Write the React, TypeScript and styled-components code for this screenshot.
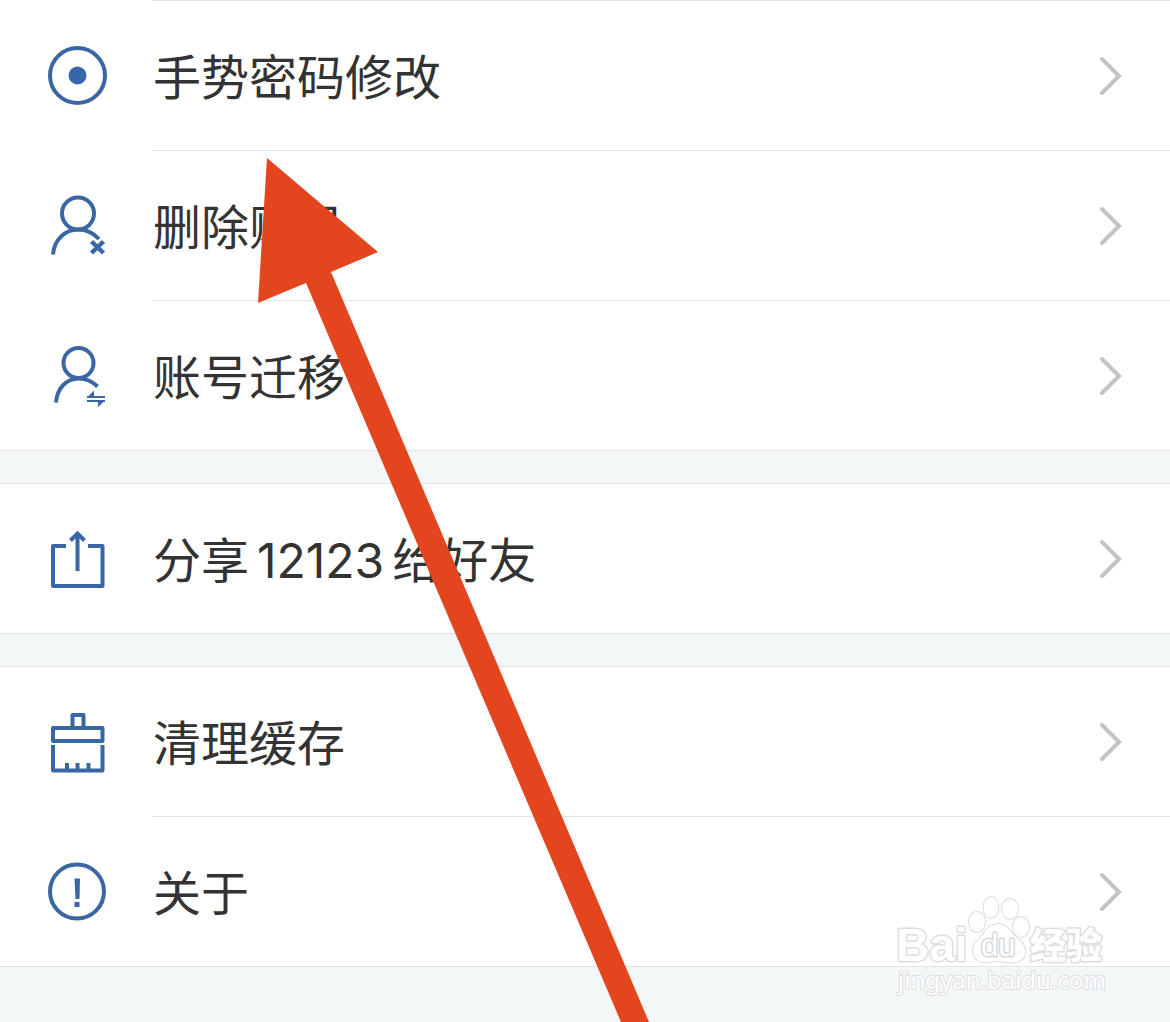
import React from 'react';
import styled, { createGlobalStyle } from 'styled-components';

const GlobalStyle = createGlobalStyle`
  *, *::before, *::after { box-sizing: border-box; }
  body {
    margin: 0;
    background: #f3f7f8;
    color: #333333;
    font-family: Inter, "Noto Sans CJK SC", sans-serif;
  }
`;

const Page = styled.main`
  position: relative;
  min-height: 100vh;
  overflow: hidden;
  display: flex;
  flex-direction: column;
  gap: 32px;
`;

const Group = styled.ul<{ $continued?: boolean }>`
  list-style: none;
  margin: 0;
  padding: 0;
  background: #ffffff;
  border-top: ${p => (p.$continued ? '0' : '1px solid #e2e5e6')};
  border-bottom: 1px solid #e2e5e6;
`;

const Row = styled.button`
  display: flex;
  width: 100%;
  padding: 0;
  border: 0;
  background: none;
  color: inherit;
  font: inherit;
  text-align: left;
  cursor: pointer;
`;

const IconCell = styled.span`
  flex: 0 0 153px;
  display: flex;
  align-items: center;
  padding: 2px 0 0 42px;
`;

const Body = styled.span<{ $divided: boolean }>`
  flex: 1;
  display: flex;
  align-items: center;
  justify-content: space-between;
  height: ${p => (p.$divided ? '150px' : '149px')};
  padding-right: 44px;
  border-top: ${p => (p.$divided ? '1px solid #e3e3e3' : '0')};
`;

const Label = styled.span`
  padding-top: 5px;
  font-size: 48px;
  line-height: 72px;
`;

const Digits = styled.span`
  margin: 0 8px;
`;

const LineIcon = styled.svg`
  display: block;
  width: 70px;
  height: 70px;
  fill: none;
  stroke: #3a67a3;
  stroke-width: 4;
`;

const Chevron = styled.svg`
  width: 30px;
  height: 44px;
  fill: none;
  stroke: #c4c4c6;
  stroke-width: 4;
  stroke-linecap: round;
`;

const Pointer = styled.svg`
  position: absolute;
  top: 0;
  left: 0;
  width: 700px;
  height: 1022px;
  fill: #e3451f;
  pointer-events: none;
`;

const Watermark = styled.svg`
  position: absolute;
  right: 54px;
  top: 890px;
  width: 226px;
  height: 112px;
  fill: #ffffff;
  stroke: #dcdedf;
  stroke-width: 2;
  stroke-linejoin: round;
  paint-order: stroke;
  pointer-events: none;
`;

const BrandText = styled.text`
  font: 700 46px "Liberation Sans", sans-serif;
  stroke-width: 3;
`;

const DuText = styled.text`
  font: 400 31px "Liberation Sans", sans-serif;
  stroke: #d6d8d9;
  stroke-width: 3;
`;

const ChineseText = styled.text`
  font: 900 36px "Noto Sans CJK SC", sans-serif;
  stroke-width: 3;
`;

const AddressText = styled.text`
  font: 400 24px "Noto Sans", sans-serif;
`;

const GestureIcon = () => (
  <LineIcon viewBox="0 0 70 70" aria-hidden="true">
    <circle cx="35.5" cy="34.5" r="27.5" />
    <circle cx="35.5" cy="34.5" r="9" fill="#3866a8" stroke="none" />
  </LineIcon>
);

const RemoveUserIcon = () => (
  <LineIcon viewBox="0 0 70 70" aria-hidden="true">
    <circle cx="36" cy="22.5" r="16" />
    <path d="M11 63.5C12 49 23 38.5 36 38.5C44 38.5 51 41.5 57 48" />
    <path d="M49.5 50.5L61.5 62M61.5 50.5L49.5 62" strokeWidth="4.5" />
  </LineIcon>
);

const TransferUserIcon = () => (
  <LineIcon viewBox="0 0 70 70" aria-hidden="true">
    <circle cx="36.5" cy="22" r="15" />
    <path d="M14 61.5C15 48 24 37.5 36.5 37.5C44 37.5 50 40 55.5 45.5" />
    <path d="M45 56H63M45 60H63" strokeWidth="2" />
    <path d="M44.5 57L52 49.5V57ZM63.5 59L56 66V59Z" fill="#3a67a3" stroke="none" />
  </LineIcon>
);

const ShareIcon = () => (
  <LineIcon viewBox="0 0 70 70" strokeLinejoin="round" aria-hidden="true">
    <path d="M24 21H11V61H60.5V21H46" />
    <path d="M35.5 46V9M28.5 15.5L35.5 8.5L42.5 15.5" strokeLinejoin="miter" />
  </LineIcon>
);

const BrushIcon = () => (
  <LineIcon viewBox="0 0 70 70" strokeLinejoin="round" aria-hidden="true">
    <path d="M30.5 20V7H41.5V20M11 20H60.5V33H11Z" />
    <path d="M11 37V62.5H60.5V37M25 62V55M35.5 62V55M46.5 62V55" />
  </LineIcon>
);

const AboutIcon = () => (
  <LineIcon viewBox="0 0 70 70" aria-hidden="true">
    <circle cx="35" cy="34.5" r="27" />
    <path d="M32.5 21.5H38L37.5 42H33.5ZM32.5 45H37.5V50H32.5Z" fill="#3a67a3" stroke="none" />
  </LineIcon>
);

type Item = { key: string; label: React.ReactNode; Icon: React.ComponentType };

const accountItems: Item[] = [
  { key: 'gesture', label: '手势密码修改', Icon: GestureIcon },
  { key: 'remove', label: '删除账号', Icon: RemoveUserIcon },
  { key: 'transfer', label: '账号迁移', Icon: TransferUserIcon },
];
const shareItems: Item[] = [
  { key: 'share', label: <>分享<Digits>12123</Digits>给好友</>, Icon: ShareIcon },
];
const systemItems: Item[] = [
  { key: 'cache', label: '清理缓存', Icon: BrushIcon },
  { key: 'about', label: '关于', Icon: AboutIcon },
];

function SettingsGroup({ items, continued = false }: { items: Item[]; continued?: boolean }) {
  return (
    <Group $continued={continued}>
      {items.map(({ key, label, Icon }, index) => (
        <li key={key}>
          <Row type="button">
            <IconCell><Icon /></IconCell>
            <Body $divided={continued || index > 0}>
              <Label>{label}</Label>
              <Chevron viewBox="0 0 30 44" aria-hidden="true">
                <path d="M6 5L23 22L6 39" />
              </Chevron>
            </Body>
          </Row>
        </li>
      ))}
    </Group>
  );
}

export default function App() {
  return (
    <>
      <GlobalStyle />
      <Page>
        <SettingsGroup items={accountItems} continued />
        <SettingsGroup items={shareItems} />
        <SettingsGroup items={systemItems} />
        <Pointer viewBox="0 0 700 1022" aria-hidden="true">
          <path d="M267 158L378 252L331 272L649 1022H621L306 283L258 303Z" />
        </Pointer>
        <Watermark viewBox="0 0 226 112">
          <BrandText x="6" y="71">Bai</BrandText>
          <ellipse cx="87" cy="32" rx="8" ry="10" />
          <ellipse cx="101" cy="17.5" rx="7.5" ry="10.5" />
          <ellipse cx="120" cy="19" rx="8" ry="10" />
          <ellipse cx="131" cy="37" rx="8" ry="10" />
          <path d="M108 34C96 34 95 45 87 51C80 56 82 72 94 72C100 72 103 71 109 71C115 71 118 73 124 72C138 71 138 57 129 50C121 44 119 34 108 34Z" />
          <DuText x="91" y="66">du</DuText>
          <ChineseText x="140" y="69">经验</ChineseText>
          <AddressText x="8" y="99">jingyan.baidu.com</AddressText>
        </Watermark>
      </Page>
    </>
  );
}
